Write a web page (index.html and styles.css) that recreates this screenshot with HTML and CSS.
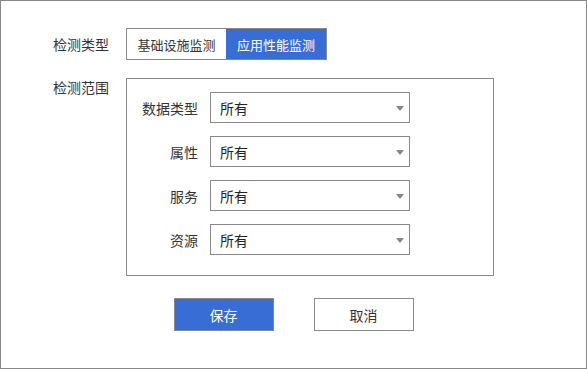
FILE: index.html
```html
<!DOCTYPE html>
<html lang="zh-CN">
<head>
    <meta charset="UTF-8">
    <meta name="viewport" content="width=device-width, initial-scale=1.0">
    <title>检测设置</title>
    <link rel="stylesheet" href="styles.css">
</head>
<body>

    <div class="panel">
        <div class="form-row type-row">
            <span class="form-label">检测类型</span>
            <div class="tabs">
                <button class="tab">基础设施监测</button>
                <button class="tab active">应用性能监测</button>
            </div>
        </div>

        <div class="form-row scope-row">
            <span class="form-label scope-label">检测范围</span>
            <div class="scope-box">
                <div class="field">
                    <span class="field-label">数据类型</span>
                    <div class="select">
                        <span>所有</span>
                        <svg class="arrow" width="8" height="5" viewBox="0 0 8 5"><path d="M0 0H8L4 5Z" fill="#888"/></svg>
                    </div>
                </div>
                <div class="field">
                    <span class="field-label">属性</span>
                    <div class="select">
                        <span>所有</span>
                        <svg class="arrow" width="8" height="5" viewBox="0 0 8 5"><path d="M0 0H8L4 5Z" fill="#888"/></svg>
                    </div>
                </div>
                <div class="field">
                    <span class="field-label">服务</span>
                    <div class="select">
                        <span>所有</span>
                        <svg class="arrow" width="8" height="5" viewBox="0 0 8 5"><path d="M0 0H8L4 5Z" fill="#888"/></svg>
                    </div>
                </div>
                <div class="field">
                    <span class="field-label">资源</span>
                    <div class="select">
                        <span>所有</span>
                        <svg class="arrow" width="8" height="5" viewBox="0 0 8 5"><path d="M0 0H8L4 5Z" fill="#888"/></svg>
                    </div>
                </div>
            </div>
        </div>

        <div class="actions">
            <button class="btn primary">保存</button>
            <button class="btn">取消</button>
        </div>
    </div>

</body>
</html>
```
FILE: styles.css
```css
* {
    box-sizing: border-box;
}

body {
    margin: 0;
    padding: 0;
    background-color: #fff;
    font-family: "Microsoft YaHei", "Noto Sans CJK SC", sans-serif;
    color: #333;
}

.panel {
    width: 587px;
    height: 369px;
    border: 1px solid #888;
    padding: 27px 0 0 52px;
}

.form-row {
    display: flex;
}

.type-row {
    align-items: center;
}

.form-label {
    width: 73px;
    font-size: 14px;
    line-height: 20px;
}

.tabs {
    display: flex;
    border: 1px solid #888;
    height: 32px;
}

.tab {
    width: 99px;
    border: none;
    background: #fff;
    padding: 0;
    font-family: inherit;
    font-size: 13px;
    color: #333;
    cursor: pointer;
}

.tab.active {
    width: 100px;
    background-color: #376dd5;
    color: #fff;
}

.scope-row {
    margin-top: 18px;
}

.scope-label {
    margin-top: 0;
    line-height: 18px;
}

.scope-box {
    width: 368px;
    height: 198px;
    border: 1px solid #888;
    padding: 13px 0 0 11px;
    display: flex;
    flex-direction: column;
    gap: 13px;
}

.field {
    display: flex;
    align-items: center;
    gap: 12px;
}

.field-label {
    width: 60px;
    text-align: right;
    font-size: 14px;
}

.select {
    width: 200px;
    height: 31px;
    border: 1px solid #888;
    display: flex;
    align-items: center;
    justify-content: space-between;
    padding: 0 5px 0 9px;
    font-size: 14px;
    color: #222;
}

.arrow {
    margin-top: 1px;
}

.actions {
    display: flex;
    justify-content: center;
    gap: 40px;
    margin: 22px 0 0 -52px;
}

.btn {
    width: 100px;
    height: 33px;
    border: 1px solid #888;
    background: #fff;
    font-family: inherit;
    font-size: 14px;
    color: #333;
    cursor: pointer;
}

.btn.primary {
    background-color: #376dd5;
    color: #fff;
}
```
